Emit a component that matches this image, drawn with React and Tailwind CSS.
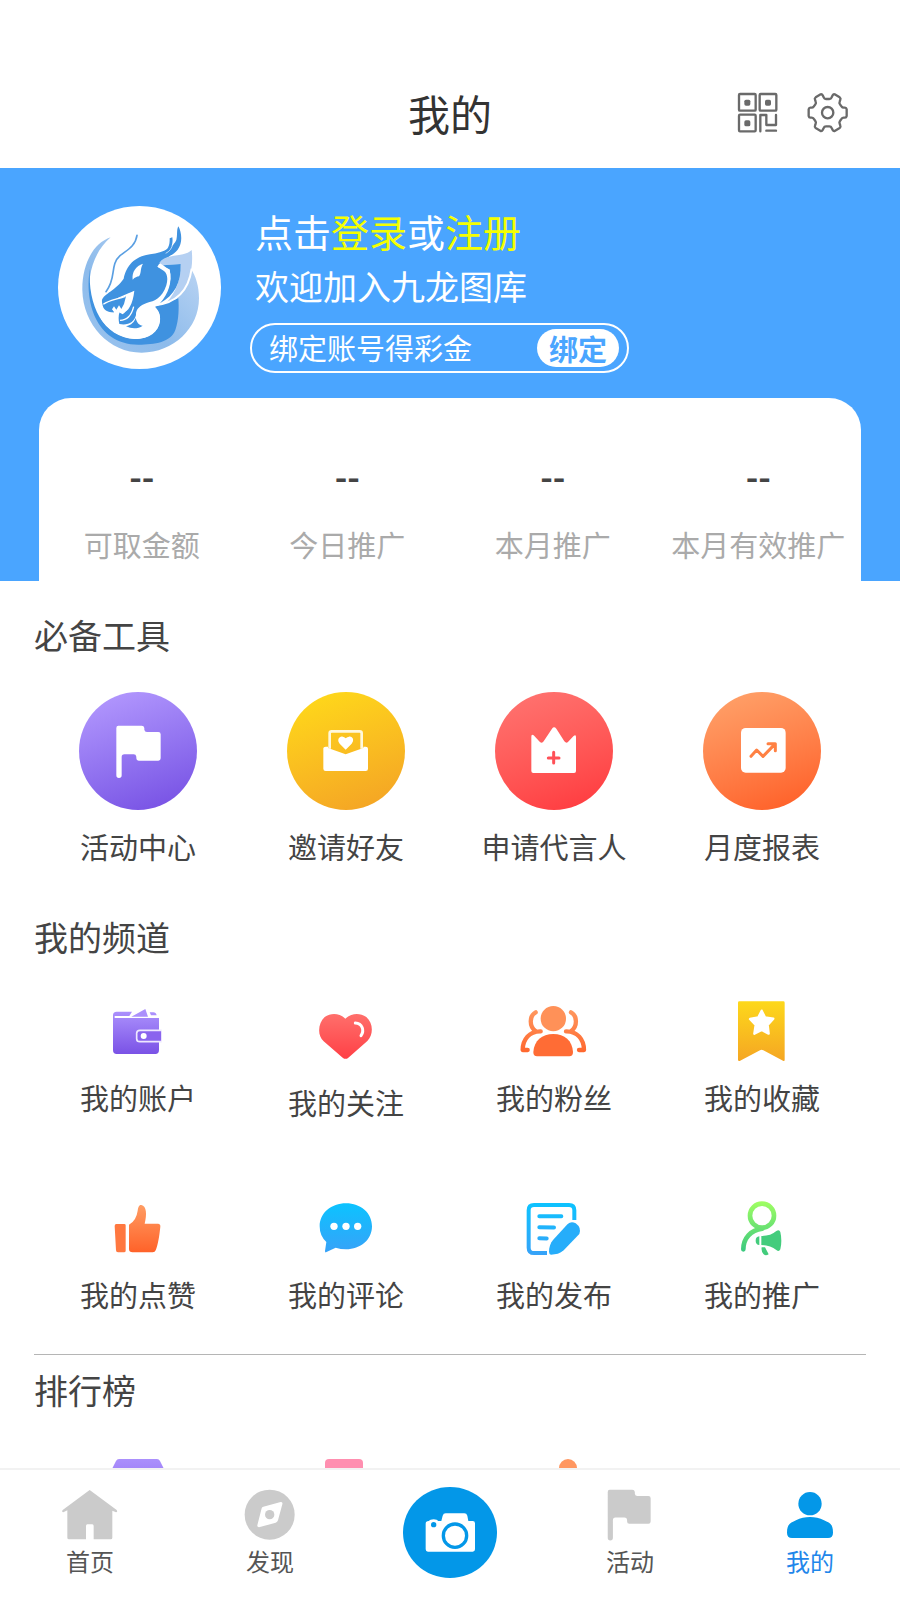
const gradients = [
  ["purple", "#ab90fc", "#7a52e6"],
  ["red", "#ff6f6b", "#ff4046"],
  ["orange", "#ff9c63", "#ff6229"],
  ["yellow", "#fdd81b", "#f5a623"],
  ["blue", "#0cc3ff", "#37a2f8"],
  ["green", "#a0ff63", "#33c481"],
];

function Gradients() {
  return (
    <svg className="absolute size-0" aria-hidden="true">
      <defs>
        {gradients.map(([id, from, to]) => (
          <linearGradient key={id} id={id} x1="0" y1="0" x2="0" y2="1">
            <stop offset="0" stopColor={from} />
            <stop offset="1" stopColor={to} />
          </linearGradient>
        ))}
        <linearGradient id="greenLine" gradientUnits="userSpaceOnUse" x1="0" y1="64" x2="0" y2="226">
          <stop offset="0" stopColor="#a0ff63" />
          <stop offset="1" stopColor="#33c481" />
        </linearGradient>
        <linearGradient id="blueLine" gradientUnits="userSpaceOnUse" x1="0" y1="68" x2="0" y2="226">
          <stop offset="0" stopColor="#0cc3ff" />
          <stop offset="1" stopColor="#37a2f8" />
        </linearGradient>
        <linearGradient id="orangeLine" gradientUnits="userSpaceOnUse" x1="0" y1="78" x2="0" y2="230">
          <stop offset="0" stopColor="#ff9c63" />
          <stop offset="1" stopColor="#ff6229" />
        </linearGradient>
        <linearGradient id="crescent" x1="1" y1="0" x2="0" y2="1">
          <stop offset="0" stopColor="#c5daf5" />
          <stop offset="0.6" stopColor="#8dbbeb" />
          <stop offset="1" stopColor="#9cc4ee" />
        </linearGradient>
      </defs>
    </svg>
  );
}

function QrIcon() {
  return (
    <svg viewBox="1071 66 123 123" className="size-[41px]" fill="none" stroke="#6a6a6a" strokeWidth="7" strokeLinejoin="round" strokeLinecap="round">
      <rect x="1077" y="72" width="50" height="50" rx="3" />
      <rect x="1139" y="72" width="50" height="50" rx="3" />
      <rect x="1077" y="134" width="50" height="50" rx="3" />
      <g fill="#6a6a6a" stroke="none">
        <rect x="1093" y="89" width="18" height="18" rx="5" />
        <rect x="1155" y="89" width="18" height="18" rx="5" />
        <rect x="1093" y="151" width="18" height="18" rx="5" />
      </g>
      <path d="M1141 184V135H1159V165H1188V135M1159 182H1188" />
    </svg>
  );
}

function GearIcon() {
  return (
    <svg viewBox="1281 66 123 123" className="size-[41px]" fill="none" stroke="#6a6a6a" strokeWidth="7" strokeLinejoin="round">
      <path d="M1322 73Q1326 72 1328 76L1331 82Q1333 87 1338 87H1348Q1353 87 1355 82L1358 76Q1360 72 1364 73L1379 82Q1383 85 1381 89L1379 95Q1377 99 1380 103L1385 110Q1387 113 1391 113H1395Q1399 113 1400 118V138Q1399 143 1395 143H1391Q1387 143 1385 146L1380 153Q1377 157 1379 161L1381 167Q1383 171 1379 174L1364 183Q1360 184 1358 180L1355 174Q1353 169 1348 169H1338Q1333 169 1331 174L1328 180Q1326 184 1322 183L1307 174Q1303 171 1305 167L1307 161Q1309 157 1306 153L1301 146Q1299 143 1295 143H1291Q1287 143 1286 138V118Q1287 113 1291 113H1295Q1299 113 1301 110L1306 103Q1309 99 1307 95L1305 89Q1303 85 1307 82Z" />
      <circle cx="1343" cy="128" r="17" />
    </svg>
  );
}

function DragonLogo() {
  return (
    <svg viewBox="54 48 489 489" className="size-[163px] shrink-0" role="img" aria-label="九龙图库">
      <circle cx="298.500" cy="292.500" r="244.500" fill="#fff" />
      <path d="M212 142C158 160 126 225 127 300C129 405 208 488 305 488C400 488 477 415 477 325C477 288 467 258 453 236L410 325L340 440L285 447C190 445 140 370 150 260C157 210 180 170 212 142Z" fill="url(#crescent)" />
      <path d="M150 236C133 330 165 462 295 464C345 464 392 457 406 420C417 390 417 350 415 325L345 350C356 361 362 375 360 392C356 427 325 448 284 447C190 442 142 345 150 236Z" fill="#3f92e0" />
      <path d="M340 350C354 358 361 373 360 390C357 425 325 447 285 447C240 443 205 420 182 386L290 360Z" fill="#fff" />
      <path d="M186 330C191 312 228 300 251 266C260 228 281 200 330 193C374 188 402 168 409 150C413 135 409 121 415 109C426 128 428 160 413 179C398 198 366 206 352 230L372 243C383 252 384 268 379 286C366 325 344 333 320 339C299 347 287 358 288 375C283 396 265 407 238 402C235 388 235 376 239 366C261 374 278 347 283 302C263 312 224 323 213 340L226 349L207 351L222 367C199 366 184 350 186 330Z" fill="#3f92e0" />
      <path d="M213 346C235 338 262 322 279 306C276 334 264 362 248 373L237 367L232 372Z" fill="#fff" />
      <path d="M188 346C205 331 234 326 258 319L252 342L244 357L237 346L229 359L222 349L216 358L222 367C204 368 190 360 188 346Z" fill="#3f92e0" />
      <path d="M190 343C208 330 232 328 256 319" fill="none" stroke="#fff" strokeWidth="4" />
      <path d="M240 391C264 391 275 374 281 350" fill="none" stroke="#fff" strokeWidth="4" />
      <path d="M278 269C275 245 288 228 309 221C300 235 305 247 297 259C291 260 285 262 278 269Z" fill="#fff" />
      <path d="M258 409C274 405 284 395 287 383C290 398 297 405 308 407C294 417 275 417 258 409Z" fill="#3f92e0" />
      <path d="M366 190C384 181 390 166 389 145L397 142C400 162 393 180 380 190Z" fill="#3f92e0" />
      <path d="M377 190C390 184 395 174 399 162" fill="none" stroke="#fff" strokeWidth="2" />
      <path d="M358 218C379 188 431 204 455 180C461 229 449 288 414 320L380 338C414 298 424 258 421 222L369 226Z" fill="#b5d0f2" />
      <path d="M369 226L422 222C424 278 403 316 360 340C386 309 397 276 389 240Z" fill="#3f92e0" />
      <path d="M356 229L386 240C395 279 378 314 345 346C409 339 446 301 455 236" fill="none" stroke="#fff" strokeWidth="6" />
      <path d="M291 136C286 170 259 181 240 197C208 226 231 263 198 305" fill="none" stroke="#5a9fe2" strokeWidth="5" strokeLinecap="round" />
    </svg>
  );
}

function Flag(props) {
  return (
    <path {...props} d="M175 137H245Q252 137 253 144V149Q254 156 261 156H295Q302 156 302 163V235Q302 242 295 242H236Q229 242 229 235V230Q228 223 221 223H193Q185 223 185 231V286Q185 294 177 294T169 286V144Q169 137 175 137Z" />
  );
}

const tools = [
  {
    label: "活动中心",
    bg: "bg-linear-160 from-[#b79cff] to-[#744be2]",
    viewBox: "57 36 354 354",
    icon: <Flag fill="#fff" />,
  },
  {
    label: "邀请好友",
    bg: "bg-linear-160 from-[#ffdc18] to-[#f3a025]",
    viewBox: "681 36 354 354",
    icon: (
      <g fill="#fff">
        <path d="M809 206V160Q809 154 815 154H899Q905 154 905 160V206" fill="none" stroke="#fff8dc" strokeWidth="8" />
        <path d="M857 209L839 191C830 181 837 168 848 170Q853 170 857 175Q862 170 867 170C878 168 884 181 875 191Z" />
        <path d="M790 205Q790 200 797 200H804V204L857 223L910 204V200H917Q924 200 924 206V266Q924 273 917 273H797Q790 273 790 266Z" />
      </g>
    ),
  },
  {
    label: "申请代言人",
    bg: "bg-linear-160 from-[#ff7572] to-[#ff353c]",
    viewBox: "102 36 354 354",
    icon: (
      <>
        <path d="M211 170Q211 161 218 166L236 185Q243 192 248 184L273 146Q279 138 286 146L310 184Q317 192 323 184L337 169Q345 162 345 171V273Q345 279 339 279H217Q211 279 211 273Z" fill="#fff" />
        <path d="M278 217V249M262 234H294" fill="none" stroke="#ff5057" strokeWidth="9" strokeLinecap="round" />
      </>
    ),
  },
  {
    label: "月度报表",
    bg: "bg-linear-160 from-[#ffa46c] to-[#ff5a20]",
    viewBox: "729 36 354 354",
    icon: (
      <>
        <rect x="843" y="144" width="134" height="134" rx="14" fill="#fff" />
        <path d="M873 229L890 210L909 229L944 193M924 191H946V212" fill="none" stroke="#ff8143" strokeWidth="9" strokeLinecap="round" strokeLinejoin="round" />
      </>
    ),
  },
];

const channels = [
  {
    label: "我的账户",
    viewBox: "129 60 210 186",
    icon: (
      <>
        <path d="M159 106Q159 95 170 95H216L208 108H164V114H297V210Q297 222 286 222H170Q159 222 159 210Z" fill="url(#purple)" />
        <path d="M214 110L256 87L264 110ZM269 97H280Q288 97 290 106H273Z" fill="#ab90fc" />
        <path d="M306 151H240Q230 151 230 160V176Q230 185 240 185H306Z" fill="#8a64ee" stroke="#eee8ff" strokeWidth="5" />
        <path d="M307 145V191" stroke="#fff" strokeWidth="4" />
        <circle cx="251" cy="168" r="9" fill="#fff" />
      </>
    ),
  },
  {
    label: "我的关注",
    viewBox: "753 60 210 201",
    tall: true,
    icon: (
      <>
        <path d="M848 233L791 184C771 166 774 129 794 111C814 97 840 100 856 116C874 99 899 97 919 111C940 129 941 164 922 183L865 233Q857 240 848 233Z" fill="url(#red)" />
        <path d="M886 129C907 130 914 151 903 167" fill="none" stroke="#fff" strokeWidth="9" strokeLinecap="round" />
      </>
    ),
  },
  {
    label: "我的粉丝",
    viewBox: "177 60 210 186",
    icon: (
      <>
        <circle cx="280" cy="116" r="38" fill="#ff9158" />
        <path d="M220 216C222 182 246 162 280 162S337 182 339 216Q339 229 328 229H231Q220 229 220 216Z" fill="#ff6c35" />
        <g fill="none" stroke="url(#orangeLine)" strokeWidth="13" strokeLinecap="round" strokeLinejoin="round">
          <path d="M227 97C207 108 208 139 226 153M242 154C208 153 188 179 188 210H203" />
          <path d="M333 97C353 108 352 139 334 153M318 154C352 153 372 179 372 210H357" />
        </g>
      </>
    ),
  },
  {
    label: "我的收藏",
    viewBox: "801 60 210 186",
    icon: (
      <>
        <path d="M834 68Q834 64 838 64H970Q974 64 974 68V239Q974 245 969 242L910 211Q905 208 900 211L839 243Q834 244 834 239Z" fill="url(#yellow)" />
        <path d="M905 92L915 112L940 116L923 135L926 161L905 150L883 161L887 135L870 117L895 112Z" fill="#fff" stroke="#fff" strokeWidth="7" strokeLinejoin="round" />
      </>
    ),
  },
  {
    label: "我的点赞",
    viewBox: "129 51 210 186",
    icon: (
      <>
        <path d="M169 132H193Q197 132 197 136V212Q197 217 192 217H174Q168 217 168 211L164 138Q164 132 169 132Z" fill="#ff7840" />
        <path d="M207 134Q229 122 233 92C235 78 239 74 244 75C260 78 261 103 254 131H294Q302 132 301 140C298 169 294 194 287 211Q285 217 278 217H218Q207 217 207 207Z" fill="url(#orange)" />
      </>
    ),
  },
  {
    label: "我的评论",
    viewBox: "753 51 210 186",
    icon: (
      <>
        <path d="M858 70C902 70 936 99 936 139S902 208 858 208Q842 208 827 203L798 217Q795 218 795 213L799 186Q779 168 779 139C779 99 814 70 858 70Z" fill="url(#blue)" />
        <g fill="#fff">
          <circle cx="822" cy="139" r="11" />
          <circle cx="858" cy="139" r="11" />
          <circle cx="893" cy="139" r="11" />
        </g>
      </>
    ),
  },
  {
    label: "我的发布",
    viewBox: "177 51 210 186",
    icon: (
      <>
        <g fill="none" stroke="url(#blueLine)" strokeWidth="12">
          <path d="M343 120V91Q343 75 327 75H222Q206 75 206 91V203Q206 219 222 219H261" />
          <path d="M238 108.500L304 109M238 142L282 142.500M238 175L260 175.500" strokeLinecap="round" />
        </g>
        <path d="M323 132Q334 122 347 130Q365 143 358 162L311 211C301 221 287 224 273 224Q267 223 267 215C267 202 271 190 279 180Z" fill="#26adfa" />
      </>
    ),
  },
  {
    label: "我的推广",
    viewBox: "801 51 210 186",
    icon: (
      <>
        <g fill="none" stroke="url(#greenLine)" strokeWidth="14" strokeLinecap="round">
          <circle cx="906" cy="107" r="36" />
          <path d="M907 146C872 150 850 175 850 208" />
        </g>
        <path d="M904 168Q932 168 949 153Q958 147 961 156Q967 182 961 208Q957 217 949 210Q932 196 904 195Z" fill="#43cc7c" />
        <path d="M898 169V195Q887 194 887 182T898 169ZM905 202H915L926 223Q917 229 911 223Q903 215 905 202Z" fill="#43cc7c" />
      </>
    ),
  },
];

const rankings = [
  <path key="a" d="M36 2H74Q76 2 77 4L88 26L55 70L22 26L33 4Q34 2 36 2Z" fill="url(#purple)" />,
  <rect key="b" x="34" y="2" width="38" height="56" rx="4" fill="#ff8fb0" />,
  <g key="c" fill="#ff9761">
    <circle cx="69" cy="11" r="9" />
    <path d="M50 50V34Q50 24 69 24T88 34V50Z" />
  </g>,
];

const tabs = [
  {
    label: "首页",
    viewBox: "180 432 180 180",
    icon: <path d="M269 450L350 510Q354 515 348 517L337 512V593Q337 598 332 598H281V558Q281 553 277 553H262Q258 553 258 558V598H207Q202 598 202 593V511L190 517Q184 515 188 510Z" />,
  },
  {
    label: "发现",
    viewBox: "720 432 180 180",
    icon: (
      <>
        <circle cx="809" cy="524" r="75" />
        <path d="M790 500L842 486Q849 486 847 493L834 541Q832 546 827 548L777 562Q771 562 772 556L785 505Q786 501 790 500Z" fill="#fff" />
        <circle cx="809" cy="524" r="14" />
      </>
    ),
  },
  { label: "拍照", camera: true },
  {
    label: "活动",
    viewBox: "145 119 186 186",
    icon: <Flag />,
  },
  {
    label: "我的",
    viewBox: "990 432 180 180",
    active: true,
    icon: (
      <>
        <circle cx="1080" cy="491" r="35" />
        <path d="M1011 578C1011 550 1023 549 1038 541C1064 528 1096 528 1122 541C1138 549 1149 550 1149 578Q1149 594 1134 594H1026Q1011 594 1011 578Z" />
      </>
    ),
  },
];

function CameraButton() {
  return (
    <button type="button" aria-label="拍照" className="mt-[17px]">
      <svg viewBox="1209 441 282 273" className="h-[91px] w-[94px]">
        <ellipse cx="1350" cy="577.500" rx="141" ry="136.500" fill="#0397e8" />
        <path d="M1277 551Q1277 543 1286 543Q1290 538 1301 538T1314 543H1324L1328 527Q1330 520 1337 520H1393Q1400 520 1402 527L1405 543H1418Q1425 543 1425 550V628Q1425 635 1418 635H1284Q1277 635 1277 628Z" fill="#fff" />
        <circle cx="1301" cy="554" r="8" fill="#0397e8" />
        <circle cx="1365" cy="587" r="35" fill="#fff" stroke="#0397e8" strokeWidth="10" />
      </svg>
    </button>
  );
}

function SectionTitle({ children }) {
  return <h2 className="text-[34px] leading-12">{children}</h2>;
}

export default function App() {
  return (
    <div className="flex h-screen flex-col bg-white font-['Noto_Sans_CJK_SC',sans-serif] text-[#444]">
      <Gradients />
      <header className="grid shrink-0 grid-cols-3 items-center px-[52px] pt-[60px] pb-[3px]">
        <h1 className="col-start-2 text-center text-[42px] leading-[105px] text-[#333]">我的</h1>
        <div className="flex justify-end gap-[29px]">
          <button type="button" aria-label="二维码"><QrIcon /></button>
          <button type="button" aria-label="设置"><GearIcon /></button>
        </div>
      </header>

      <main className="min-h-0 flex-1 overflow-y-auto [scrollbar-width:none]">
        <section className="bg-[#4aa5ff] px-[39px] pt-[38px]">
          <div className="flex gap-[29px] pl-[19px] text-white">
            <DragonLogo />
            <div>
              <p className="pl-[5px] text-[38px] leading-[50px]">
                点击<a href="#login" className="text-[#f5ff00]">登录</a>或<a href="#register" className="text-[#f5ff00]">注册</a>
              </p>
              <p className="pl-[5px] text-[34px] leading-[60px]">欢迎加入九龙图库</p>
              <div className="mt-[7px] flex h-[50px] w-[379px] items-center justify-between rounded-full border-2 border-white pr-2 pl-[17px] text-[29px]">
                <span>绑定账号得彩金</span>
                <button type="button" className="h-[38px] rounded-full bg-white px-3 leading-[38px] font-bold text-[#4aa5ff]">绑定</button>
              </div>
            </div>
          </div>
          <dl className="mt-[25px] grid grid-cols-4 rounded-t-[32px] bg-white pt-[54px] pb-[17px] text-center">
            {["可取金额", "今日推广", "本月推广", "本月有效推广"].map((label) => (
              <div key={label} className="flex flex-col-reverse gap-6">
                <dt className="text-[29px] leading-10 whitespace-nowrap text-[#aaa]">{label}</dt>
                <dd className="text-[34px] leading-12 font-bold">--</dd>
              </div>
            ))}
          </dl>
        </section>

        <div className="px-[34px] pt-[30px]">
          <SectionTitle>必备工具</SectionTitle>
          <div className="mt-[33px] grid grid-cols-4">
            {tools.map((tool) => (
              <button key={tool.label} type="button" className="flex flex-col items-center">
                <span className={`size-[118px] rounded-full ${tool.bg}`}>
                  <svg viewBox={tool.viewBox} className="size-full">{tool.icon}</svg>
                </span>
                <span className="mt-4 text-[29px] leading-10">{tool.label}</span>
              </button>
            ))}
          </div>

          <div className="mt-[47px]">
            <SectionTitle>我的频道</SectionTitle>
          </div>
          <div className="mt-[39px] grid grid-cols-4 items-start gap-y-[75px]">
            {channels.map((item) => (
              <button key={item.label} type="button" className="flex flex-col items-center">
                <svg viewBox={item.viewBox} className={item.tall ? "h-[67px] w-[70px]" : "h-[62px] w-[70px]"}>{item.icon}</svg>
                <span className="mt-[15px] text-[29px] leading-10">{item.label}</span>
              </button>
            ))}
          </div>

          <hr className="mt-10 border-[#b5b5b5]" />

          <div className="mt-[11px]">
            <SectionTitle>排行榜</SectionTitle>
          </div>
          <div className="mt-[43px] grid grid-cols-4 justify-items-center pb-10">
            {rankings.map((shape, i) => (
              <svg key={i} viewBox="0 0 110 80" className="h-20 w-[110px]">{shape}</svg>
            ))}
          </div>
        </div>
      </main>

      <nav className="grid h-[132px] shrink-0 grid-cols-5 items-start justify-items-center border-t-2 border-[#f2f2f2] bg-white">
        {tabs.map((tab) =>
          tab.camera ? (
            <CameraButton key={tab.label} />
          ) : (
            <a
              key={tab.label}
              href="#tab"
              className={`mt-3.5 flex flex-col items-center text-2xl ${tab.active ? "text-[#1f86ea]" : "text-[#555]"}`}
            >
              <svg viewBox={tab.viewBox} className="size-15" fill={tab.active ? "#0397e8" : "#cbcbcb"}>{tab.icon}</svg>
              <span className="mt-px leading-8">{tab.label}</span>
            </a>
          )
        )}
      </nav>
    </div>
  );
}
